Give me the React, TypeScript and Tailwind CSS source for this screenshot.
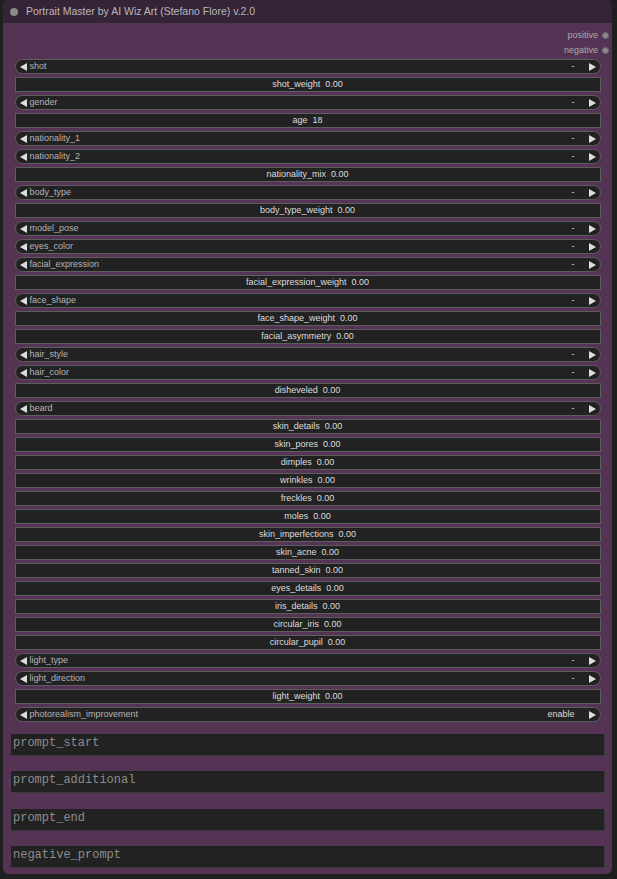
import React from 'react'

type Row = { kind: 'combo' | 'number'; name: string; value: string }

const rows: Row[] = [
  { kind: 'combo', name: 'shot', value: '-' },
  { kind: 'number', name: 'shot_weight', value: '0.00' },
  { kind: 'combo', name: 'gender', value: '-' },
  { kind: 'number', name: 'age', value: '18' },
  { kind: 'combo', name: 'nationality_1', value: '-' },
  { kind: 'combo', name: 'nationality_2', value: '-' },
  { kind: 'number', name: 'nationality_mix', value: '0.00' },
  { kind: 'combo', name: 'body_type', value: '-' },
  { kind: 'number', name: 'body_type_weight', value: '0.00' },
  { kind: 'combo', name: 'model_pose', value: '-' },
  { kind: 'combo', name: 'eyes_color', value: '-' },
  { kind: 'combo', name: 'facial_expression', value: '-' },
  { kind: 'number', name: 'facial_expression_weight', value: '0.00' },
  { kind: 'combo', name: 'face_shape', value: '-' },
  { kind: 'number', name: 'face_shape_weight', value: '0.00' },
  { kind: 'number', name: 'facial_asymmetry', value: '0.00' },
  { kind: 'combo', name: 'hair_style', value: '-' },
  { kind: 'combo', name: 'hair_color', value: '-' },
  { kind: 'number', name: 'disheveled', value: '0.00' },
  { kind: 'combo', name: 'beard', value: '-' },
  { kind: 'number', name: 'skin_details', value: '0.00' },
  { kind: 'number', name: 'skin_pores', value: '0.00' },
  { kind: 'number', name: 'dimples', value: '0.00' },
  { kind: 'number', name: 'wrinkles', value: '0.00' },
  { kind: 'number', name: 'freckles', value: '0.00' },
  { kind: 'number', name: 'moles', value: '0.00' },
  { kind: 'number', name: 'skin_imperfections', value: '0.00' },
  { kind: 'number', name: 'skin_acne', value: '0.00' },
  { kind: 'number', name: 'tanned_skin', value: '0.00' },
  { kind: 'number', name: 'eyes_details', value: '0.00' },
  { kind: 'number', name: 'iris_details', value: '0.00' },
  { kind: 'number', name: 'circular_iris', value: '0.00' },
  { kind: 'number', name: 'circular_pupil', value: '0.00' },
  { kind: 'combo', name: 'light_type', value: '-' },
  { kind: 'combo', name: 'light_direction', value: '-' },
  { kind: 'number', name: 'light_weight', value: '0.00' },
  { kind: 'combo', name: 'photorealism_improvement', value: 'enable' },
]

const prompts = ['prompt_start', 'prompt_additional', 'prompt_end', 'negative_prompt']

function Arrow({ dir }: { dir: 'left' | 'right' }) {
  return (
    <svg width="7" height="8" viewBox="0 0 7 8" className="shrink-0" aria-hidden>
      {dir === 'left' ? <path d="M0 4 L7 0 L7 8 Z" fill="#dddddd" /> : <path d="M7 4 L0 0 L0 8 Z" fill="#dddddd" />}
    </svg>
  )
}

function Combo({ name, value }: { name: string; value: string }) {
  return (
    <div className="flex h-[15px] items-center rounded-full border border-[#5e5e5e] bg-[#222222] pl-[4px] pr-[4px]">
      <Arrow dir="left" />
      <span className="ml-[3px] flex-1 leading-none text-[#b4b4b4]">{name}</span>
      <span className="mr-[14px] leading-none text-[#dddddd]">{value}</span>
      <Arrow dir="right" />
    </div>
  )
}

function NumberField({ name, value }: { name: string; value: string }) {
  return (
    <div className="flex h-[15px] items-center justify-center gap-[5px] border border-[#5e5e5e] bg-[#222222] leading-none text-[#dddddd]">
      <span>{name}</span>
      <span>{value}</span>
    </div>
  )
}

function Slot({ label }: { label: string }) {
  return (
    <div className="flex h-[15px] items-center justify-end gap-[4px]">
      <span className="text-[9px] leading-none text-[#aaaaaa]">{label}</span>
      <span className="h-[7px] w-[7px] rounded-full border border-[#6a6a6a] bg-[#8a8a90]" />
    </div>
  )
}

export default function App() {
  return (
    <div className="min-h-screen bg-[#1f1f1f] pl-[3px] font-['Liberation_Sans',Arial,sans-serif]">
      <div className="flex h-[874px] w-[609px] flex-col overflow-hidden rounded-[6px] bg-[#553355]">
        <div className="flex h-[23px] shrink-0 items-center gap-[8px] bg-[#352338] pl-[7px]">
          <span className="h-[8px] w-[8px] rounded-full bg-[#8a8a8a]" />
          <span className="text-[10.5px] leading-none text-[#b8b8b8]">
            Portrait Master by AI Wiz Art (Stefano Flore) v.2.0
          </span>
        </div>

        <div className="flex flex-col pr-[3px] pt-[5px]">
          <Slot label="positive" />
          <Slot label="negative" />
        </div>

        <div className="mt-[1px] flex flex-col gap-[3px] px-[11.5px] text-[9px]">
          {rows.map((r) =>
            r.kind === 'combo' ? (
              <Combo key={r.name} name={r.name} value={r.value} />
            ) : (
              <NumberField key={r.name} name={r.name} value={r.value} />
            ),
          )}
        </div>

        <div className="mt-[11.5px] flex flex-col gap-[15.5px] pl-[8px] pr-[7px]">
          {prompts.map((p) => (
            <div
              key={p}
              className="h-[22px] border-b border-r border-[#3a3a3a] bg-[#222222] px-[2px] pt-[3px] font-['Liberation_Mono',monospace] text-[12px] leading-none text-[#8c8c8c]"
            >
              {p}
            </div>
          ))}
        </div>
      </div>
    </div>
  )
}
